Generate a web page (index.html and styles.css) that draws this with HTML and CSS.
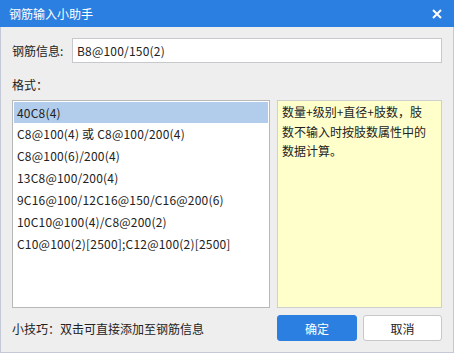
FILE: index.html
```html
<!DOCTYPE html>
<html lang="zh-CN">
<head>
    <meta charset="UTF-8">
    <title>钢筋输入小助手</title>
    <link rel="stylesheet" href="styles.css">
</head>
<body>
    <div class="dialog">
        <div class="titlebar">
            <span class="title">钢筋输入小助手</span>
            <svg class="close" width="10" height="10" viewBox="0 0 10 10">
                <path d="M1 1 L9 9 M9 1 L1 9" stroke="#fff" stroke-width="2"/>
            </svg>
        </div>
        <div class="content">
            <div class="info-row">
                <label class="info-label">钢筋信息:</label>
                <input class="info-input" type="text" value="B8@100/150(2)">
            </div>
            <div class="format-label">格式<span class="colon">：</span></div>
            <div class="format-area">
                <ul class="format-list">
                    <li class="selected">40C8(4)</li>
                    <li>C8@100(4) 或 C8@100/200(4)</li>
                    <li>C8@100(6)/200(4)</li>
                    <li>13C8@100/200(4)</li>
                    <li>9C16@100/12C16@150/C16@200(6)</li>
                    <li>10C10@100(4)/C8@200(2)</li>
                    <li>C10@100(2)[2500];C12@100(2)[2500]</li>
                </ul>
                <div class="hint-box">数量+级别+直径+肢数，肢数不输入时按肢数属性中的数据计算。</div>
            </div>
            <div class="footer">
                <span class="tip">小技巧<span class="colon">：</span>双击可直接添加至钢筋信息</span>
                <div class="buttons">
                    <button class="btn btn-ok">确定</button>
                    <button class="btn btn-cancel">取消</button>
                </div>
            </div>
        </div>
    </div>
</body>
</html>
```

FILE: styles.css
```css
html, body {
    margin: 0;
    padding: 0;
}

body {
    font-family: "Noto Sans CJK SC", "Noto Sans", sans-serif;
    font-size: 12px;
    color: #222;
}

.dialog {
    width: 454px;
    height: 353px;
    box-sizing: border-box;
    border: 1px solid #c3c9d6;
    border-top: none;
    background-color: #eeeeee;
    display: flex;
    flex-direction: column;
}

.titlebar {
    height: 27px;
    margin: 0 -1px;
    background-color: #2b7fe0;
    color: #fff;
    display: flex;
    align-items: center;
    justify-content: space-between;
    padding: 0 12px 0 9px;
}

.title {
    font-size: 12px;
}

.content {
    flex: 1;
    padding: 11px;
    display: flex;
    flex-direction: column;
}

/* 全角冒号居中显示 */
.colon {
    font-family: "Noto Sans CJK TC", sans-serif;
}

.info-row {
    display: flex;
    align-items: center;
    height: 25px;
}

.info-label {
    width: 60px;
}

.info-input {
    flex: 1;
    height: 25px;
    box-sizing: border-box;
    border: 1px solid #c6c8cc;
    padding: 0 4px;
    font-family: inherit;
    font-size: 12px;
    letter-spacing: 0.2px;
    color: #222;
    outline: none;
}

.format-label {
    margin-top: 13px;
    height: 18px;
    line-height: 18px;
}

.format-area {
    margin-top: 6px;
    display: flex;
    gap: 7px;
    height: 208px;
}

.format-list {
    margin: 0;
    padding: 1px;
    list-style: none;
    width: 258px;
    box-sizing: border-box;
    border: 1px solid #b8b8b8;
    background-color: #fff;
}

.format-list li {
    height: 22px;
    line-height: 22px;
    padding-left: 3px;
    letter-spacing: 0.2px;
}

.format-list .selected {
    background-color: #b2cdeb;
    height: 21px;
    line-height: 21px;
}

.hint-box {
    flex: 1;
    box-sizing: border-box;
    border: 1px solid #cfcfcf;
    background-color: #ffffcc;
    padding: 1px 8px 0 4px;
    line-height: 19.5px;
}

.footer {
    margin-top: 7px;
    display: flex;
    align-items: center;
    justify-content: space-between;
}

.buttons {
    display: flex;
    gap: 6px;
}

.btn {
    width: 80px;
    height: 26px;
    border-radius: 3px;
    font-family: inherit;
    font-size: 12px;
    padding: 0;
}

.btn-ok {
    background-color: #2b7fe0;
    border: 1px solid #2b7fe0;
    color: #fff;
}

.btn-cancel {
    width: 79px;
    background-color: #fff;
    border: 1px solid #c8c8c8;
    color: #222;
}
```
